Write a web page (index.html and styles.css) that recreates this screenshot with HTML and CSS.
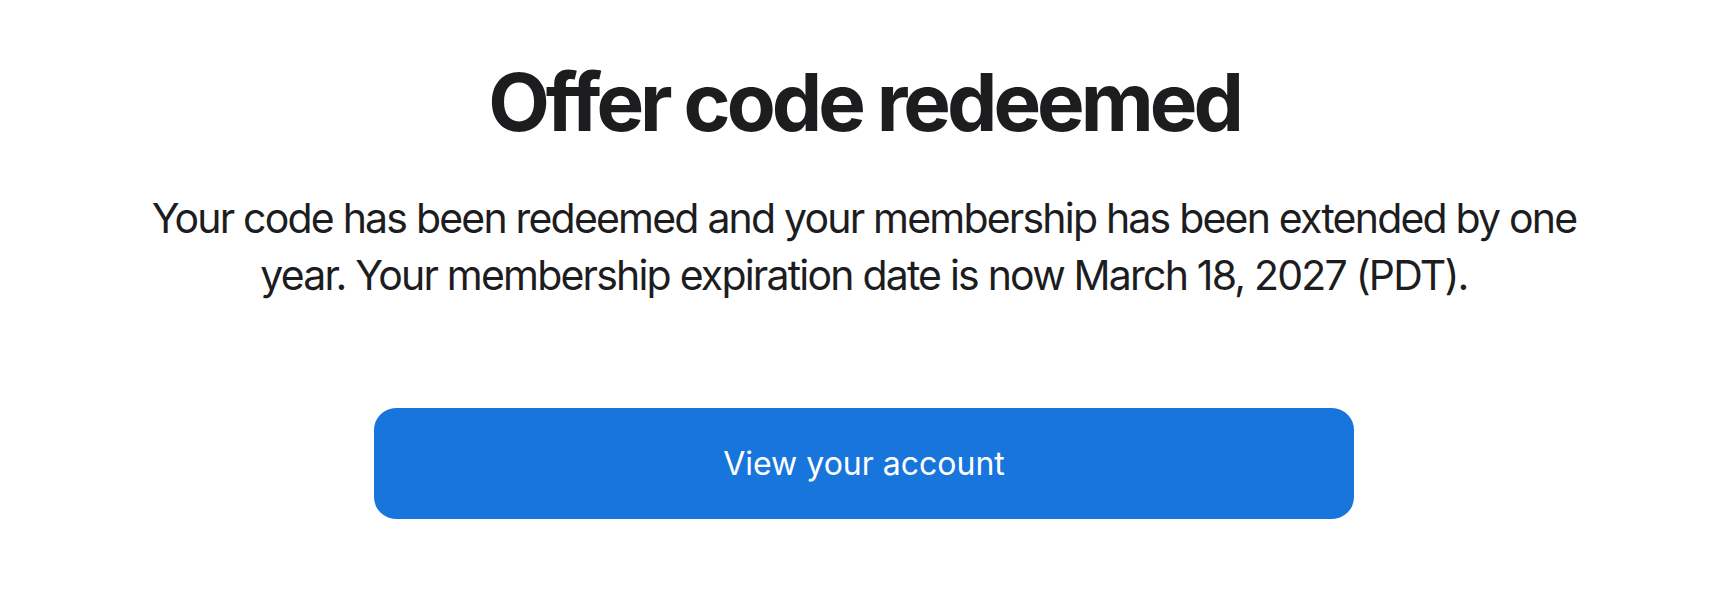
FILE: index.html
```html
<!DOCTYPE html>
<html lang="en">
<head>
  <meta charset="UTF-8" />
  <meta name="viewport" content="width=device-width, initial-scale=1.0"/>
  <title>Offer code redeemed</title>
  <link rel="stylesheet" href="styles.css">
</head>
<body>
  <main class="redeem">
    <h1>Offer code redeemed</h1>
    <p class="message">
      Your code has been redeemed and your membership has been extended by one
      year. Your membership expiration date is now March 18, 2027 (PDT).
    </p>
    <a class="account-btn" href="#">View your account</a>
  </main>
</body>
</html>
```

FILE: styles.css
```css
html, body {
  margin: 0;
  padding: 0;
  background: #ffffff;
  color: #1d1d1f;
  font-family: Inter, "Noto Sans", sans-serif;
}

.redeem {
  display: flex;
  flex-direction: column;
  align-items: center;
  padding: 58px 0 0 10px;
}

h1 {
  margin: 0;
  font-size: 80px;
  line-height: 88px;
  font-weight: 700;
  letter-spacing: -4px;
}

.message {
  margin: 44px 0 0;
  max-width: 1460px;
  font-size: 41px;
  line-height: 57px;
  letter-spacing: -1.8px;
  text-align: center;
}

.account-btn {
  margin-top: 104px;
  width: 980px;
  height: 111px;
  display: flex;
  align-items: center;
  justify-content: center;
  background: #1875dc;
  color: #ffffff;
  border-radius: 22px;
  font-size: 32px;
  text-decoration: none;
}
```
